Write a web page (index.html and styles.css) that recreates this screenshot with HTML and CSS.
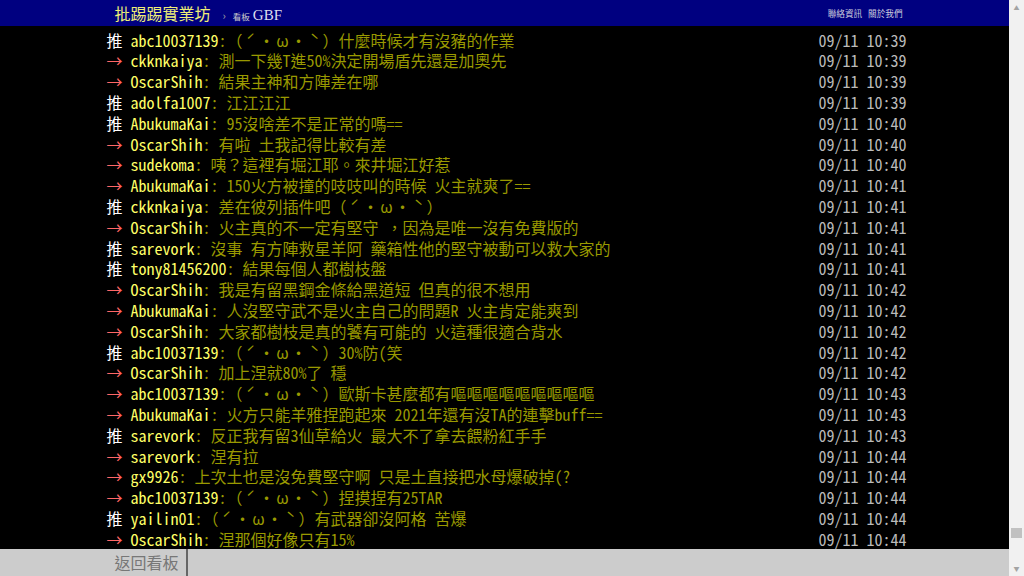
FILE: index.html
```
<!DOCTYPE html>
<html lang="zh-Hant">
<head>
    <meta charset="UTF-8">
    <meta name="viewport" content="width=device-width, initial-scale=1.0">
    <title>[閒聊] GBF - 看板 GBF - 批踢踢實業坊</title>
    <link rel="stylesheet" href="styles.css">
</head>
<body>
    <div class="page">
        <div class="main">
            <div class="topbar">
                <div class="topbar-inner">
                    <div class="crumbs">
                        <a class="logo" href="#">批踢踢實業坊</a>
                        <span class="sep">›</span>
                        <span class="board-label">看板</span>
                        <a class="board" href="#">GBF</a>
                    </div>
                    <div class="links">
                        <a href="#">聯絡資訊</a>
                        <a href="#">關於我們</a>
                    </div>
                </div>
            </div>

            <div class="screen">
                <div class="pushes">
                    <div class="push"><span class="push-tag good">推 </span><span class="push-userid">abc10037139</span><span class="push-content">:（<span class="fw">ˊ</span>・<span class="fw">ω</span>・<span class="fw">ˋ</span>）什麼時候才有沒豬的作業</span><span class="push-time">09/11 10:39</span></div>
                    <div class="push"><span class="push-tag">→ </span><span class="push-userid">ckknkaiya</span><span class="push-content">: 測一下幾T進50%決定開場盾先還是加奧先</span><span class="push-time">09/11 10:39</span></div>
                    <div class="push"><span class="push-tag">→ </span><span class="push-userid">OscarShih</span><span class="push-content">: 結果主神和方陣差在哪</span><span class="push-time">09/11 10:39</span></div>
                    <div class="push"><span class="push-tag good">推 </span><span class="push-userid">adolfa1007</span><span class="push-content">: 江江江江</span><span class="push-time">09/11 10:39</span></div>
                    <div class="push"><span class="push-tag good">推 </span><span class="push-userid">AbukumaKai</span><span class="push-content">: 95沒啥差不是正常的嗎==</span><span class="push-time">09/11 10:40</span></div>
                    <div class="push"><span class="push-tag">→ </span><span class="push-userid">OscarShih</span><span class="push-content">: 有啦 土我記得比較有差</span><span class="push-time">09/11 10:40</span></div>
                    <div class="push"><span class="push-tag">→ </span><span class="push-userid">sudekoma</span><span class="push-content">: 咦？這裡有堀江耶。來井堀江好惹</span><span class="push-time">09/11 10:40</span></div>
                    <div class="push"><span class="push-tag">→ </span><span class="push-userid">AbukumaKai</span><span class="push-content">: 150火方被撞的吱吱叫的時候 火主就爽了==</span><span class="push-time">09/11 10:41</span></div>
                    <div class="push"><span class="push-tag good">推 </span><span class="push-userid">ckknkaiya</span><span class="push-content">: 差在彼列插件吧（<span class="fw">ˊ</span>・<span class="fw">ω</span>・<span class="fw">ˋ</span>）</span><span class="push-time">09/11 10:41</span></div>
                    <div class="push"><span class="push-tag">→ </span><span class="push-userid">OscarShih</span><span class="push-content">: 火主真的不一定有堅守 ，因為是唯一沒有免費版的</span><span class="push-time">09/11 10:41</span></div>
                    <div class="push"><span class="push-tag good">推 </span><span class="push-userid">sarevork</span><span class="push-content">: 沒事 有方陣救星羊阿 藥箱性他的堅守被動可以救大家的</span><span class="push-time">09/11 10:41</span></div>
                    <div class="push"><span class="push-tag good">推 </span><span class="push-userid">tony81456200</span><span class="push-content">: 結果每個人都樹枝盤</span><span class="push-time">09/11 10:41</span></div>
                    <div class="push"><span class="push-tag">→ </span><span class="push-userid">OscarShih</span><span class="push-content">: 我是有留黑鋼金條給黑道短 但真的很不想用</span><span class="push-time">09/11 10:42</span></div>
                    <div class="push"><span class="push-tag">→ </span><span class="push-userid">AbukumaKai</span><span class="push-content">: 人沒堅守武不是火主自己的問題R 火主肯定能爽到</span><span class="push-time">09/11 10:42</span></div>
                    <div class="push"><span class="push-tag">→ </span><span class="push-userid">OscarShih</span><span class="push-content">: 大家都樹枝是真的饕有可能的 火這種很適合背水</span><span class="push-time">09/11 10:42</span></div>
                    <div class="push"><span class="push-tag good">推 </span><span class="push-userid">abc10037139</span><span class="push-content">:（<span class="fw">ˊ</span>・<span class="fw">ω</span>・<span class="fw">ˋ</span>）30%防(笑</span><span class="push-time">09/11 10:42</span></div>
                    <div class="push"><span class="push-tag">→ </span><span class="push-userid">OscarShih</span><span class="push-content">: 加上涅就80%了 穩</span><span class="push-time">09/11 10:42</span></div>
                    <div class="push"><span class="push-tag">→ </span><span class="push-userid">abc10037139</span><span class="push-content">:（<span class="fw">ˊ</span>・<span class="fw">ω</span>・<span class="fw">ˋ</span>）歐斯卡甚麼都有嘔嘔嘔嘔嘔嘔嘔嘔嘔</span><span class="push-time">09/11 10:43</span></div>
                    <div class="push"><span class="push-tag">→ </span><span class="push-userid">AbukumaKai</span><span class="push-content">: 火方只能羊雅捏跑起來 2021年還有沒TA的連擊buff==</span><span class="push-time">09/11 10:43</span></div>
                    <div class="push"><span class="push-tag good">推 </span><span class="push-userid">sarevork</span><span class="push-content">: 反正我有留3仙草給火 最大不了拿去餵粉紅手手</span><span class="push-time">09/11 10:43</span></div>
                    <div class="push"><span class="push-tag">→ </span><span class="push-userid">sarevork</span><span class="push-content">: 涅有拉</span><span class="push-time">09/11 10:44</span></div>
                    <div class="push"><span class="push-tag">→ </span><span class="push-userid">gx9926</span><span class="push-content">: 上次土也是沒免費堅守啊 只是土直接把水母爆破掉(?</span><span class="push-time">09/11 10:44</span></div>
                    <div class="push"><span class="push-tag">→ </span><span class="push-userid">abc10037139</span><span class="push-content">:（<span class="fw">ˊ</span>・<span class="fw">ω</span>・<span class="fw">ˋ</span>）捏摸捏有25TAR</span><span class="push-time">09/11 10:44</span></div>
                    <div class="push"><span class="push-tag good">推 </span><span class="push-userid">yailin01</span><span class="push-content">:（<span class="fw">ˊ</span>・<span class="fw">ω</span>・<span class="fw">ˋ</span>）有武器卻沒阿格 苦爆</span><span class="push-time">09/11 10:44</span></div>
                    <div class="push"><span class="push-tag">→ </span><span class="push-userid">OscarShih</span><span class="push-content">: 涅那個好像只有15%</span><span class="push-time">09/11 10:44</span></div>
                </div>
            </div>

            <div class="navbar">
                <div class="navbar-inner">
                    <a class="back" href="#">返回看板</a>
                </div>
            </div>
        </div>

        <div class="scrollbar">
            <span class="arrow">▲</span>
            <div class="track"><div class="thumb"></div></div>
            <span class="arrow">▼</span>
        </div>
    </div>
</body>
</html>
```

FILE: styles.css
```
* {
    margin: 0;
    padding: 0;
    box-sizing: border-box;
}

html, body {
    height: 100%;
    overflow: hidden;
}

body {
    background: #000;
    color: #ccc;
    font-family: "Noto Sans Mono CJK TC", "Noto Sans CJK TC", monospace;
    font-size: 16px;
}

a {
    color: inherit;
    text-decoration: none;
}

.page {
    display: flex;
    height: 100%;
}

.main {
    flex: 1;
    display: flex;
    flex-direction: column;
    min-width: 0;
}

/* top bar */
.topbar {
    background: #000080;
    height: 26px;
    flex-shrink: 0;
}

.topbar-inner {
    width: 804px;
    margin: 0 auto;
    padding: 0 4px 0 12px;
    height: 100%;
    display: flex;
    align-items: center;
    justify-content: space-between;
}

.crumbs {
    display: flex;
    align-items: baseline;
}

.logo {
    color: #eeee77;
    font-family: "Noto Sans CJK TC", sans-serif;
    font-size: 16px;
    line-height: 26px;
}

.sep {
    color: #aaa;
    font-size: 11px;
    margin: 0 7px 0 12px;
}

.board-label {
    color: #ccc;
    font-size: 8.5px;
    font-family: "Noto Sans CJK TC", sans-serif;
    margin-right: 3px;
}

.board {
    color: #dde;
    font-family: "Liberation Serif", serif;
    font-size: 15px;
}

.links {
    display: flex;
    gap: 6px;
    font-family: "Noto Sans CJK TC", sans-serif;
    font-size: 8.6px;
    color: #ccd;
}

/* push list */
.screen {
    flex: 1;
    overflow: hidden;
    padding-top: 3.6px;
}

.pushes {
    width: 804px;
    margin: 0 auto;
    padding-left: 4px;
}

.push {
    display: flex;
    height: 20.8px;
    line-height: 20.8px;
    white-space: pre;
}

.push-tag {
    color: #f66;
}

.push-tag.good {
    color: #fff;
}

.push-userid {
    color: #ff6;
}

.push-content {
    flex: 1;
    color: #990;
}

/* wide glyphs take a full cell on the bbs */
.fw {
    display: inline-block;
    width: 1em;
    text-align: center;
}

.push-time {
    color: #bbb;
}

/* bottom nav */
.navbar {
    height: 27px;
    flex-shrink: 0;
    background: #cccccc;
}

.navbar-inner {
    width: 804px;
    margin: 0 auto;
    padding-left: 12px;
    height: 100%;
    display: flex;
}

.back {
    color: #777;
    font-family: "Noto Sans CJK TC", sans-serif;
    font-size: 16px;
    line-height: 27px;
    padding-right: 7px;
    border-right: 2px solid #666;
}

/* fake window scrollbar */
.scrollbar {
    width: 15px;
    background: #f1f1f1;
    display: flex;
    flex-direction: column;
    align-items: center;
    flex-shrink: 0;
}

.arrow {
    color: #a3a3a3;
    font-size: 6px;
    height: 15px;
    line-height: 15px;
}

.track {
    flex: 1;
    width: 100%;
    display: flex;
    flex-direction: column;
    justify-content: flex-end;
    padding: 0 2px 23px;
}

.thumb {
    height: 10px;
    background: #c1c1c1;
}
```
